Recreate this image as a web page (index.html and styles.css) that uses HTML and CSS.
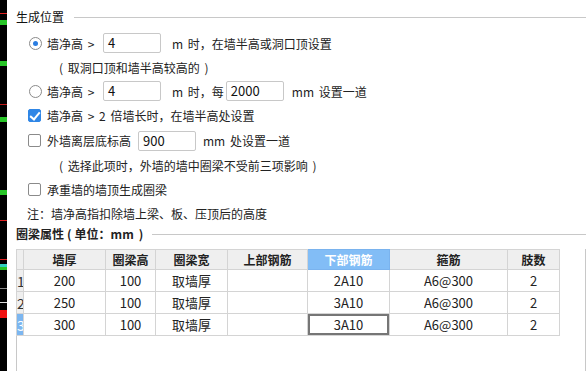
FILE: index.html
```html
<!doctype html>
<html>
  <head>
    <meta charset="utf-8">
    <title>圈梁设置</title>
    <link rel="stylesheet" href="styles.css">
  </head>
  <body>
    <div class="app">
      <div class="strip"></div>
      <div class="panel">
        <div class="group-title"><span>生成位置</span><i></i></div>

        <div class="options">
          <div class="row">
            <span class="radio on"></span>
            <span class="lbl">墙净高 &gt;</span>
            <span class="box">4</span>
            <span class="after">m 时，在墙半高或洞口顶设置</span>
          </div>
          <div class="row note">( 取洞口顶和墙半高较高的 )</div>
          <div class="row">
            <span class="radio"></span>
            <span class="lbl">墙净高 &gt;</span>
            <span class="box">4</span>
            <span class="after">m 时，每</span>
            <span class="box">2000</span>
            <span class="after2">mm 设置一道</span>
          </div>
          <div class="row tall">
            <span class="check on"></span>
            <span>墙净高 &gt; 2 倍墙长时，在墙半高处设置</span>
          </div>
          <div class="row tall">
            <span class="check"></span>
            <span class="lbl2">外墙离层底标高</span>
            <span class="box">900</span>
            <span class="after3">mm 处设置一道</span>
          </div>
          <div class="row note">( 选择此项时，外墙的墙中圈梁不受前三项影响 )</div>
          <div class="row">
            <span class="check"></span>
            <span>承重墙的墙顶生成圈梁</span>
          </div>
          <div class="row hint">注：墙净高指扣除墙上梁、板、压顶后的高度</div>
        </div>

        <div class="group-title bold">
          <span>圈梁属性<span class="po">(</span>单位：mm<span class="pc">)</span></span><i></i>
        </div>

        <div class="grid">
          <table>
            <colgroup>
              <col style="width:7px"><col style="width:82px"><col style="width:50px"><col style="width:72px">
              <col style="width:80px"><col style="width:82px"><col style="width:118px"><col style="width:52px">
            </colgroup>
            <thead>
              <tr>
                <th class="rh"></th><th>墙厚</th><th>圈梁高</th><th>圈梁宽</th>
                <th>上部钢筋</th><th class="hl">下部钢筋</th><th>箍筋</th><th>肢数</th>
              </tr>
            </thead>
            <tbody>
              <tr><td class="rh">1</td><td>200</td><td>100</td><td>取墙厚</td><td></td><td>2A10</td><td>A6@300</td><td>2</td></tr>
              <tr><td class="rh">2</td><td>250</td><td>100</td><td>取墙厚</td><td></td><td>3A10</td><td>A6@300</td><td>2</td></tr>
              <tr><td class="rh sel">3</td><td>300</td><td>100</td><td>取墙厚</td><td></td><td class="cur">3A10</td><td>A6@300</td><td>2</td></tr>
            </tbody>
          </table>
        </div>
      </div>
    </div>
  </body>
</html>
```

FILE: styles.css
```css
* {
  box-sizing: border-box;
}
body {
  margin: 0;
  background: #fff;
  font-family: "Noto Sans CJK SC", "Noto Sans", sans-serif;
  font-size: 12px;
  color: #222;
}
.app {
  display: flex;
  height: 371px;
  overflow: hidden;
}
.strip {
  width: 7px;
  flex: none;
  background:
    linear-gradient(#e02020, #e02020) 0 13px / 7px 1px no-repeat,
    linear-gradient(#27c427, #27c427) 0 20px / 7px 5px no-repeat,
    linear-gradient(#27c427, #27c427) 0 61px / 7px 5px no-repeat,
    linear-gradient(#e02020, #e02020) 0 64px / 7px 1px no-repeat,
    linear-gradient(#c01818, #c01818) 0 104px / 7px 1px no-repeat,
    linear-gradient(#27c427, #27c427) 0 117px / 7px 5px no-repeat,
    linear-gradient(#27c427, #27c427) 0 190px / 7px 5px no-repeat,
    linear-gradient(#e02020, #e02020) 0 193px / 7px 1px no-repeat,
    linear-gradient(#e02020, #e02020) 0 220px / 7px 1px no-repeat,
    linear-gradient(#e02020, #e02020) 0 259px / 7px 1px no-repeat,
    linear-gradient(#30d0c0, #30d0c0) 0 264px / 7px 3px no-repeat,
    linear-gradient(#27c427, #27c427) 0 267px / 7px 3px no-repeat,
    linear-gradient(#888, #888) 0 288px / 7px 1px no-repeat,
    linear-gradient(#ddd, #ddd) 0 302px / 7px 1px no-repeat,
    linear-gradient(#f01010, #f01010) 0 310px / 7px 8px no-repeat,
    #000;
}
.panel {
  flex: 1;
  padding: 8px 1px 0 9px;
}

.group-title {
  display: flex;
  align-items: center;
  height: 18px;
  line-height: 18px;
  color: #111;
}
.group-title i {
  flex: 1;
  margin-left: 10px;
  border-top: 1px solid #c8c8c8;
}
.group-title.bold {
  font-weight: bold;
  color: #222;
}
.group-title.bold i {
  margin-left: 9px;
}
.po {
  margin: 0 3px 0 3px;
}
.pc {
  margin-left: 5px;
}

.options {
  margin-top: 5px;
}
.row {
  display: flex;
  align-items: center;
  height: 24px;
  padding-left: 13px;
  white-space: nowrap;
}
.row.tall {
  height: 25px;
}
.row.note {
  padding-left: 43px;
  word-spacing: 2px;
}
.row.hint {
  padding-left: 11px;
}

.radio {
  width: 13px;
  height: 13px;
  border: 1px solid #8a8a8a;
  border-radius: 50%;
  margin-right: 5px;
  display: flex;
  align-items: center;
  justify-content: center;
  flex: none;
}
.radio.on::after {
  content: "";
  width: 5px;
  height: 5px;
  border-radius: 50%;
  background: #2a7de1;
}
.check {
  width: 13px;
  height: 13px;
  border: 1px solid #8a8a8a;
  border-radius: 2px;
  margin-left: -1px;
  margin-right: 6px;
  flex: none;
  position: relative;
}
.check.on {
  background: #2f86e6;
  border-color: #2f86e6;
}
.check.on::after {
  content: "";
  position: absolute;
  left: 3px;
  top: 0px;
  width: 4px;
  height: 8px;
  border: solid #fff;
  border-width: 0 2px 2px 0;
  transform: rotate(40deg);
}

.lbl {
  width: 56px;
  word-spacing: 2px;
}
.lbl2 {
  width: 91px;
}
.box {
  width: 58px;
  height: 20px;
  line-height: 18px;
  border: 1px solid #c8c8c8;
  border-radius: 2px;
  padding-left: 4px;
  font-size: 13px;
  color: #111;
}
.after {
  margin-left: 11px;
  margin-right: 2px;
  word-spacing: 2px;
}
.after2 {
  margin-left: 8px;
  word-spacing: 2px;
}
.after3 {
  margin-left: 7px;
  word-spacing: 2px;
}
.row.tall span:last-child {
  word-spacing: 2px;
}

.grid {
  margin-top: 6px;
  height: 130px;
  border-left: 1px solid #c8c8c8;
  border-right: 1px solid #c8c8c8;
}
table {
  border-collapse: collapse;
  table-layout: fixed;
  width: 543px;
  margin-left: -1px;
}
th, td {
  border: 1px solid #d4d4d4;
  padding: 0;
  text-align: center;
  white-space: nowrap;
  overflow: hidden;
}
th {
  height: 20px;
  background: #efefef;
  font-weight: bold;
  color: #222;
}
th.hl {
  background: #82bdf6;
  border-color: #7ab3ee;
  color: #fff;
}
td {
  height: 22px;
  font-size: 13px;
  color: #222;
}
.rh {
  background: #efefef;
  text-align: left;
  font-size: 14px;
  color: #333;
}
td.rh.sel {
  background: #7cb6f0;
  color: #fff;
}
td.cur {
  box-shadow: inset 0 0 0 2px #767676;
}
```
